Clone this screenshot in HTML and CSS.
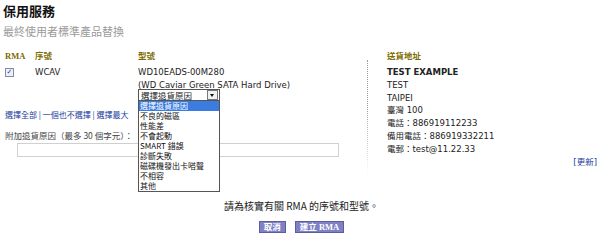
FILE: index.html
```html
<!DOCTYPE html>
<html lang="zh-Hant">
<head>
  <meta charset="UTF-8" />
  <title>保用服務</title>
  <link rel="stylesheet" href="styles.css">
</head>
<body>

  <!-- page heading -->
  <h1 class="title">保用服務</h1>
  <p class="subtitle">最終使用者標準產品替換</p>

  <!-- RMA item table -->
  <div class="rma">
    <div class="col col-check">
      <div class="head">RMA</div>
      <div class="check"><span class="box">&#10003;</span></div>
    </div>
    <div class="col col-serial">
      <div class="head">序號</div>
      <div class="line">WCAV</div>
    </div>
    <div class="col col-model">
      <div class="head">型號</div>
      <div class="line">WD10EADS-00M280</div>
      <div class="line">(WD Caviar Green SATA Hard Drive)</div>
      <div class="select-wrap">
        <div class="select">
          <span>選擇退貨原因</span>
          <span class="arrow"></span>
        </div>
        <!-- open dropdown list -->
        <ul class="options">
          <li class="active">選擇退貨原因</li>
          <li>不良的磁區</li>
          <li>性能差</li>
          <li>不會起動</li>
          <li>SMART 錯誤</li>
          <li>診斷失敗</li>
          <li>磁碟機發出卡嗒聲</li>
          <li>不相容</li>
          <li>其他</li>
        </ul>
      </div>
    </div>
    <div class="divider"></div>
    <div class="col col-address">
      <div class="head">送貨地址</div>
      <div class="line strong">TEST EXAMPLE</div>
      <div class="line">TEST</div>
      <div class="line">TAIPEI</div>
      <div class="line">臺灣 100</div>
      <div class="line">電話：886919112233</div>
      <div class="line">備用電話：886919332211</div>
      <div class="line">電郵：test@11.22.33</div>
      <div class="update"><a href="#">[更新]</a></div>
    </div>
  </div>

  <!-- selection links + extra reason -->
  <div class="pick">
    <a href="#">選擇全部</a> | <a href="#">一個也不選擇</a> | <a href="#">選擇最大</a>
  </div>
  <div class="reason">附加退貨原因（最多 30 個字元）：</div>
  <div class="reason-input"></div>

  <p class="notice">請為核實有關 RMA 的序號和型號。</p>

  <div class="actions">
    <button class="btn">取消</button>
    <button class="btn">建立 RMA</button>
  </div>

</body>
</html>
```

FILE: styles.css
```css
body {
  margin: 0;
  padding: 3px 0 0 3px;
  width: 597px;
  height: 239px;
  overflow: hidden;
  background: #ffffff;
  font-family: "DejaVu Sans", "Noto Sans CJK TC", sans-serif;
  font-size: 8.5px;
  color: #222222;
}
.title {
  margin: 0;
  font-size: 13px;
  line-height: 15px;
  font-weight: bold;
  color: #111111;
  font-family: "Noto Sans CJK TC", sans-serif;
}
.subtitle {
  margin: 6px 0 0 0;
  font-size: 11px;
  line-height: 14px;
  color: #9a9a9a;
  font-family: "Noto Sans CJK TC", sans-serif;
}
.rma {
  display: flex;
  margin-top: 12px;
}
.col {
  display: flex;
  flex-direction: column;
}
.head {
  font-weight: bold;
  color: #7d6b00;
  line-height: 12px;
  height: 12px;
  margin-bottom: 4px;
  font-family: "Liberation Serif", "Noto Sans CJK TC", serif;
  font-size: 8.5px;
}
.line {
  line-height: 12.8px;
  white-space: nowrap;
}
.strong {
  font-weight: bold;
}
.col-check {
  width: 32px;
  padding-left: 2px;
  box-sizing: border-box;
}
.check {
  height: 12.8px;
  display: flex;
  align-items: center;
}
.box {
  display: inline-block;
  width: 7px;
  height: 7px;
  border: 1px solid #8a8a9a;
  background: #eef0f8;
  color: #2040c0;
  font-size: 7px;
  line-height: 7px;
  text-align: center;
  font-weight: bold;
}
.col-serial {
  width: 103px;
}
.col-model {
  width: 229px;
}
.select-wrap {
  position: relative;
  width: 82px;
  margin-top: -3px;
}
.select {
  display: flex;
  justify-content: space-between;
  align-items: center;
  height: 10px;
  border: 1px solid #555555;
  background: #ffffff;
  font-family: "Noto Sans CJK TC", sans-serif;
  font-size: 8.5px;
  line-height: 10px;
  padding-left: 2px;
}
.arrow {
  width: 9px;
  height: 8px;
  border: 1px solid #777777;
  margin-right: 1px;
  background: #f0f0f0;
  position: relative;
}
.arrow::after {
  content: "";
  position: absolute;
  left: 2px;
  top: 3px;
  border-left: 2.5px solid transparent;
  border-right: 2.5px solid transparent;
  border-top: 3px solid #111111;
}
.options {
  position: absolute;
  left: 0;
  top: 11px;
  width: 80px;
  margin: 0;
  padding: 0;
  list-style: none;
  background: #ffffff;
  border: 1px solid #555555;
  font-family: "Noto Sans CJK TC", sans-serif;
  font-size: 8px;
  z-index: 5;
}
.options li {
  height: 10.1px;
  line-height: 10.1px;
  padding-left: 1px;
  white-space: nowrap;
  color: #111111;
}
.options li.active {
  background: #3a7ce0;
  color: #ffffff;
}
.divider {
  width: 0;
  margin-top: 10px;
  height: 118px;
  border-left: 1px dotted #9a9a9a;
  -webkit-mask-image: linear-gradient(#000 40%, transparent);
  mask-image: linear-gradient(#000 40%, transparent);
}
.col-address {
  padding-left: 19px;
  width: 210px;
}
.update {
  text-align: right;
  line-height: 12px;
}
a {
  color: #1a3c9c;
  text-decoration: none;
}
.pick {
  position: relative;
  margin-top: -69px;
  padding-left: 2px;
  color: #1a3c9c;
  line-height: 12px;
  font-family: "Noto Sans CJK TC", sans-serif;
  font-size: 8px;
  width: 132px;
}
.reason {
  margin-top: 8px;
  padding-left: 2px;
  color: #444444;
  line-height: 12px;
  font-family: "Noto Sans CJK TC", sans-serif;
  font-size: 8.5px;
}
.reason-input {
  margin: 2px 0 0 14px;
  width: 320px;
  height: 12px;
  border: 1px solid #d0d0d0;
}
.notice {
  margin: 42px 0 0 0;
  text-align: center;
  font-family: "Noto Sans CJK TC", sans-serif;
  font-size: 10px;
  line-height: 14px;
  color: #222222;
}
.actions {
  display: flex;
  justify-content: center;
  gap: 9px;
  margin-top: 8px;
}
.btn {
  padding: 0 4px;
  height: 12px;
  font-family: "Liberation Serif", "Noto Sans CJK TC", serif;
  font-size: 8.5px;
  font-weight: bold;
  line-height: 10px;
  color: #ffffff;
  background: #8080c4;
  border: 1px solid #5c5ca0;
  cursor: pointer;
}
```
